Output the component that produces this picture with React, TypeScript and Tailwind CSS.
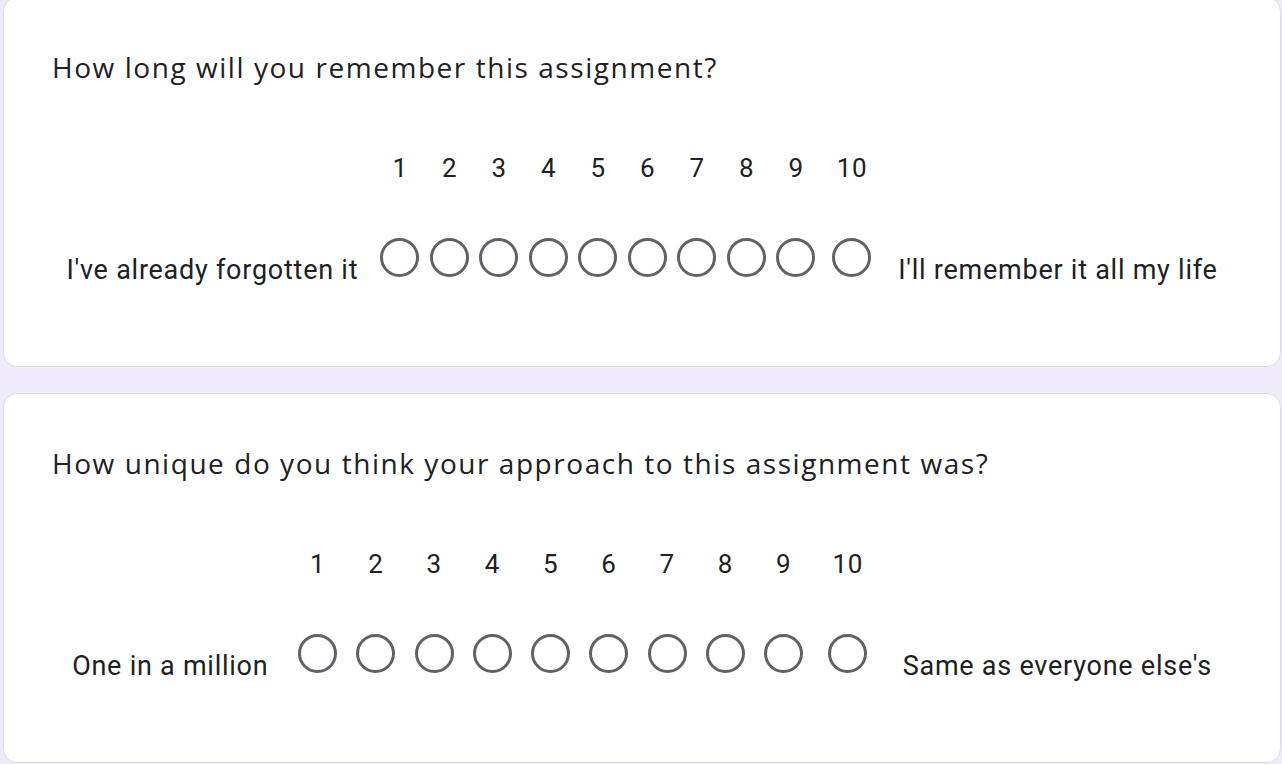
import React from 'react';

interface ScaleQuestion {
  title: string;
  low: string;
  high: string;
  colWidth: string;
  lastColWidth: string;
  lowPad: string;
  highPad: string;
}

const questions: ScaleQuestion[] = [
  {
    title: 'How long will you remember this assignment?',
    low: "I've already forgotten it",
    high: "I'll remember it all my life",
    colWidth: 'w-[49.5px]',
    lastColWidth: 'w-[62.5px]',
    lowPad: 'pr-[17px]',
    highPad: 'pl-[15px]',
  },
  {
    title: 'How unique do you think your approach to this assignment was?',
    low: 'One in a million',
    high: "Same as everyone else's",
    colWidth: 'w-[58.25px]',
    lastColWidth: 'w-[70px]',
    lowPad: 'pr-[20px]',
    highPad: 'pl-[20px]',
  },
];

const Radio: React.FC = () => (
  <div className="w-[39px] h-[39px] rounded-full border-[3.5px] border-[#5f6368] bg-white shrink-0" />
);

const QuestionCard: React.FC<{ q: ScaleQuestion }> = ({ q }) => {
  const values = [1, 2, 3, 4, 5, 6, 7, 8, 9, 10];

  return (
    <div className="bg-white border border-[#dadce0] rounded-[14px] pl-[48px] pr-[48px] pt-[51px] pb-[81px]">
      <div className="text-[28px] leading-[36px] text-[#202124] tracking-[1.55px] font-['Open_Sans',sans-serif]">
        {q.title}
      </div>
      <div className="mt-[68px] flex justify-center items-start font-['Roboto',sans-serif] text-[#202124]">
        <div className={`mt-[102px] text-[27px] leading-[30px] tracking-[0.75px] whitespace-nowrap ${q.lowPad}`}>
          {q.low}
        </div>
        {values.map(v => (
          <div key={v} className={`flex flex-col items-center ${v === 10 ? q.lastColWidth : q.colWidth}`}>
            <div className="text-[26px] leading-[30px] tracking-[0.5px]">{v}</div>
            <div className="mt-[55px]">
              <Radio />
            </div>
          </div>
        ))}
        <div className={`mt-[102px] text-[27px] leading-[30px] tracking-[0.75px] whitespace-nowrap ${q.highPad}`}>
          {q.high}
        </div>
      </div>
    </div>
  );
};

export default function App() {
  return (
    <div className="h-screen overflow-hidden bg-[#f0ebf8]">
      <div className="-mt-[3px] pl-[3px] pr-px flex flex-col gap-[26px]">
        {questions.map(q => (
          <QuestionCard key={q.title} q={q} />
        ))}
      </div>
    </div>
  );
}
